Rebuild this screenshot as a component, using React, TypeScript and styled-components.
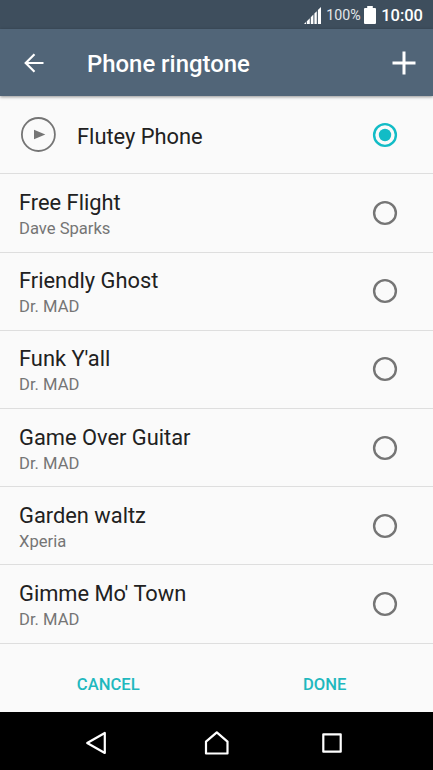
import React, { useState } from 'react';
import styled, { createGlobalStyle } from 'styled-components';

const GlobalStyle = createGlobalStyle`
  *, *::before, *::after { box-sizing: border-box; }
  body { margin: 0; background: #000; }
`;

const Screen = styled.div`
  width: 433px;
  height: 770px;
  display: flex;
  flex-direction: column;
  overflow: hidden;
  background: #fafafa;
  font-family: Roboto, 'Liberation Sans', sans-serif;
`;

const StatusBar = styled.div`
  flex: none;
  height: 29px;
  display: flex;
  align-items: center;
  justify-content: flex-end;
  padding: 1px 10px 0 0;
  background: #3e4e5d;
  color: #fff;
`;

const BatteryLevel = styled.span`
  margin: 0 3.5px 0 5.5px;
  font-size: 14.2px;
  line-height: 20px;
  color: #e3e7ea;
`;

const Clock = styled.span`
  margin: 1px 0 0 5px;
  font-size: 16.5px;
  font-weight: 500;
  line-height: 20px;
`;

const AppBar = styled.header`
  flex: none;
  position: relative;
  height: 67px;
  display: flex;
  align-items: center;
  padding: 0 17px 0 24px;
  background: #516578;
  color: #fff;
  box-shadow: 0 1px 3px rgba(0, 0, 0, 0.42);
`;

const IconButton = styled.button`
  display: flex;
  padding: 0;
  border: 0;
  background: none;
  color: inherit;
`;

const Title = styled.h1`
  flex: 1;
  margin: 2px 0 0 43px;
  font-size: 23.9px;
  font-weight: 500;
  line-height: 30px;
`;

const List = styled.div`
  flex: none;
  display: flex;
  flex-direction: column;
`;

const Row = styled.label<{ $first?: boolean }>`
  height: ${(p) => (p.$first ? 78.4 : 78.2)}px;
  display: flex;
  align-items: center;
  padding: 0 35.5px 0 19px;
  border-bottom: 1px solid #dedede;
`;

const PlayIcon = styled.svg`
  flex: none;
  margin: 0 20px 0 1px;
`;

const Texts = styled.div`
  flex: 1;
  padding-top: 4px;
`;

const Name = styled.div`
  font-size: 21.85px;
  line-height: 28px;
  color: #212121;
`;

const Artist = styled.div`
  font-size: 16.6px;
  line-height: 24px;
  color: #757575;
`;

const HiddenRadio = styled.input`
  appearance: none;
  width: 0;
  height: 0;
  margin: 0;
`;

const Actions = styled.div`
  flex: 1;
  display: grid;
  grid-template-columns: 1fr 1fr;
`;

const Action = styled.button`
  padding: 14px 0 0;
  border: 0;
  background: none;
  font: 500 16.6px/24px Roboto, 'Liberation Sans', sans-serif;
  color: #1fb8be;
`;

const NavBar = styled.nav`
  flex: none;
  height: 58px;
  display: grid;
  grid-template-columns: 157px 119px 1fr;
  align-items: center;
  background: #000;
  color: #fff;
`;

const NavButton = styled(IconButton)<{ $indent: number }>`
  padding: 3px 0 0 ${(p) => p.$indent}px;
`;

const ringtones = [
  { name: 'Flutey Phone' },
  { name: 'Free Flight', artist: 'Dave Sparks' },
  { name: 'Friendly Ghost', artist: 'Dr. MAD' },
  { name: "Funk Y'all", artist: 'Dr. MAD' },
  { name: 'Game Over Guitar', artist: 'Dr. MAD' },
  { name: 'Garden waltz', artist: 'Xperia' },
  { name: "Gimme Mo' Town", artist: 'Dr. MAD' },
];

function RadioMark({ on }: { on: boolean }) {
  const color = on ? '#12bcc6' : '#757575';
  return (
    <svg width="26" height="26" viewBox="0 0 26 26">
      <circle cx="13" cy="13" r="10.9" fill="none" stroke={color} strokeWidth="2.4" />
      {on && <circle cx="13" cy="13" r="6.2" fill={color} />}
    </svg>
  );
}

export default function App() {
  const [selected, setSelected] = useState(0);
  return (
    <>
      <GlobalStyle />
      <Screen>
        <StatusBar>
          <svg width="17" height="17" viewBox="0 0 17 17" fill="currentColor">
            <path d="M0 17l2-2V17zM2.8 14.2l3-3V17h-3zM6.8 10.2l2.6-2.6V17H6.8zM10.4 6.6L12.8 4.2V17h-2.4zM13.9 3.1L17 0v17h-3.1z" />
          </svg>
          <BatteryLevel>100%</BatteryLevel>
          <svg width="12" height="18" viewBox="0 0 12 18" fill="currentColor">
            <path d="M3.2 0h5.6v2H11a1 1 0 0 1 1 1v14a1 1 0 0 1-1 1H1a1 1 0 0 1-1-1V3a1 1 0 0 1 1-1h2.2z" />
          </svg>
          <Clock>10:00</Clock>
        </StatusBar>

        <AppBar>
          <IconButton aria-label="Back">
            <svg width="20" height="20" viewBox="0 0 20 20" fill="none" stroke="currentColor" strokeWidth="2.2">
              <path d="M19.5 10H2M10.5 1.2L1.7 10l8.8 8.8" />
            </svg>
          </IconButton>
          <Title>Phone ringtone</Title>
          <IconButton aria-label="Add">
            <svg width="24" height="24" viewBox="0 0 24 24" fill="none" stroke="currentColor" strokeWidth="3">
              <path d="M12 .5v23M.5 12h23" />
            </svg>
          </IconButton>
        </AppBar>

        <List role="radiogroup">
          {ringtones.map((tone, i) => (
            <Row key={tone.name} $first={i === 0}>
              {!tone.artist && (
                <PlayIcon width="37" height="37" viewBox="0 0 37 37">
                  <circle cx="18.4" cy="18.5" r="16.5" fill="none" stroke="#757575" strokeWidth="1.8" />
                  <path d="M14 13.7l11.3 4.8L14 23.3z" fill="#757575" />
                </PlayIcon>
              )}
              <Texts>
                <Name>{tone.name}</Name>
                {tone.artist && <Artist>{tone.artist}</Artist>}
              </Texts>
              <HiddenRadio type="radio" name="tone" checked={i === selected} onChange={() => setSelected(i)} />
              <RadioMark on={i === selected} />
            </Row>
          ))}
        </List>

        <Actions>
          <Action>CANCEL</Action>
          <Action>DONE</Action>
        </Actions>

        <NavBar>
          <NavButton $indent={85} aria-label="Navigate back">
            <svg width="22" height="24" viewBox="0 0 22 24" fill="none" stroke="currentColor" strokeWidth="2.2">
              <path d="M19.8 2v20L2.2 12z" strokeLinejoin="round" />
            </svg>
          </NavButton>
          <NavButton $indent={47} aria-label="Home">
            <svg width="26" height="26" viewBox="0 0 26 26" fill="none" stroke="currentColor" strokeWidth="2.2">
              <path d="M2 23.5V11.6L12.8 2.3l10.7 9.3v11.9z" strokeLinejoin="round" />
            </svg>
          </NavButton>
          <NavButton $indent={46} aria-label="Recent apps">
            <svg width="20" height="20" viewBox="0 0 20 20" fill="none" stroke="currentColor" strokeWidth="2.2">
              <path d="M1.3 1.3h17.4v17.4H1.3z" strokeLinejoin="round" />
            </svg>
          </NavButton>
        </NavBar>
      </Screen>
    </>
  );
}
